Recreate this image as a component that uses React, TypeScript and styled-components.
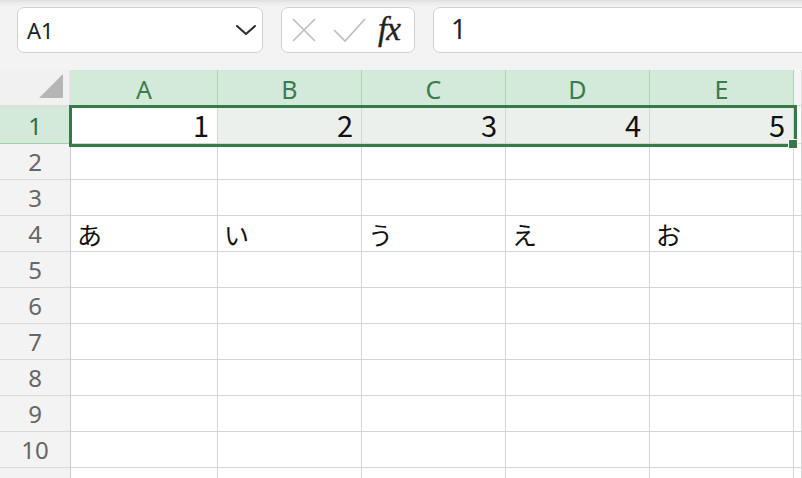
import React from 'react';
import styled, { createGlobalStyle } from 'styled-components';

const Global = createGlobalStyle`
  html, body { margin: 0; padding: 0; background: #f3f3f3; overflow: hidden; }
  body { width: 802px; height: 478px; }
`;

const Page = styled.div`
  width: 802px;
  height: 478px;
  overflow: hidden;
  background: #f3f3f3;
  display: flex;
  flex-direction: column;
`;

const Toolbar = styled.div`
  height: 70px;
  box-sizing: border-box;
  padding: 7px 0 17px 17px;
  display: flex;
  gap: 18px;
  background: linear-gradient(to bottom, #dedede 0px, #ececec 3px, #f3f3f3 7px);
  flex-shrink: 0;
  overflow: hidden;
`;

const NameBox = styled.div`
  flex: 0 0 246px;
  box-sizing: border-box;
  background: #fff;
  border: 1.5px solid #d0d0d0;
  border-radius: 7px;
  display: flex;
  align-items: center;
  justify-content: space-between;
  padding: 0 5px 0 9px;
  font-family: 'Noto Sans', 'Open Sans', sans-serif;
  font-size: 22px;
  color: #222;
`;

const FxBox = styled.div`
  flex: 0 0 134px;
  box-sizing: border-box;
  background: #fff;
  border: 1.5px solid #d0d0d0;
  border-radius: 7px;
  display: flex;
  align-items: center;
  padding: 0 0 0 9px;
`;

const IconSlot = styled.span<{ $gap: number }>`
  display: flex;
  margin-right: ${p => p.$gap}px;
`;

const FxText = styled.span`
  font-family: 'Liberation Serif', 'DejaVu Serif', serif;
  font-style: italic;
  font-size: 33px;
  color: #222;
  line-height: 1;
  letter-spacing: -1px;
  margin-top: -2px;
  -webkit-text-stroke: 0.4px #222;
`;

const FormulaInput = styled.div`
  flex: 0 0 400px;
  box-sizing: border-box;
  background: #fff;
  border: 1.5px solid #d0d0d0;
  border-radius: 7px;
  display: flex;
  align-items: center;
  padding: 0 0 4px 17px;
  font-family: 'Noto Sans', 'Open Sans', sans-serif;
  font-size: 27px;
  color: #222;
`;

const SheetWrap = styled.div`
  position: relative;
  flex: 1;
`;

const Grid = styled.div`
  display: grid;
  grid-template-columns: 71px 147px 144px 144px 144px 144px 1fr;
  grid-template-rows: 36px 38px repeat(10, 36px) 36px;
`;

const Corner = styled.div`
  background: #f1f1f1;
  border-right: 2px solid #e4e4e4;
  border-bottom: 1px solid #dcdcdc;
  box-sizing: border-box;
  display: flex;
  align-items: flex-end;
  justify-content: flex-end;
  padding: 0 6px 7px 0;
`;

const ColHead = styled.div<{ $active?: boolean }>`
  background: ${p => (p.$active ? '#d3eadb' : '#f5f5f5')};
  border-right: 1px solid ${p => (p.$active ? '#a9d6b7' : '#dcdcdc')};
  border-bottom: 1px solid ${p => (p.$active ? '#a9d6b7' : '#dcdcdc')};
  box-sizing: border-box;
  display: flex;
  align-items: center;
  justify-content: center;
  padding-top: 4px;
  font-family: 'Noto Sans', 'Open Sans', sans-serif;
  font-size: 25px;
  line-height: 1;
  color: #3a7d4b;
`;

const RowHead = styled.div<{ $active?: boolean }>`
  background: ${p => (p.$active ? '#d3eadb' : '#f3f3f3')};
  border-right: 1px solid #c9c9c9;
  border-bottom: 1px solid ${p => (p.$active ? '#9fcfae' : '#dadada')};
  border-top: ${p => (p.$active ? '2px solid #dedede' : 'none')};
  box-sizing: border-box;
  display: flex;
  align-items: center;
  justify-content: center;
  font-family: 'Noto Sans', 'Open Sans', sans-serif;
  font-size: 24px;
  line-height: 1;
  color: ${p => (p.$active ? '#2f6e3e' : '#666')};
`;

const Cell = styled.div<{ $tint?: boolean; $num?: boolean }>`
  background: ${p => (p.$tint ? '#ebf0ec' : '#fff')};
  border-right: 1px solid #d4d4d4;
  border-bottom: 1px solid #d4d4d4;
  box-sizing: border-box;
  display: flex;
  align-items: center;
  justify-content: ${p => (p.$num ? 'flex-end' : 'flex-start')};
  padding: ${p => (p.$num ? '0 8px 0 0' : '2px 0 0 6px')};
  font-family: 'Noto Sans CJK JP', 'Noto Sans', sans-serif;
  font-size: ${p => (p.$num ? '29px' : '25px')};
  line-height: 1;
  color: #111;
  white-space: nowrap;
`;

const Selection = styled.div`
  position: absolute;
  left: 69px;
  top: 35px;
  width: 728px;
  height: 42px;
  box-sizing: border-box;
  border: 3px solid #377a48;
  pointer-events: none;
`;

const Handle = styled.div`
  position: absolute;
  left: 789px;
  top: 70px;
  width: 8px;
  height: 8px;
  box-sizing: border-box;
  background: #377a48;
  outline: 1px solid #fff;
`;

const cols = ['A', 'B', 'C', 'D', 'E'];
const kana = ['あ', 'い', 'う', 'え', 'お'];

export default function App() {
  const rows: React.ReactNode[] = [];
  for (let r = 1; r <= 11; r++) {
    rows.push(
      <RowHead key={`h${r}`} $active={r === 1}>
        {r <= 10 ? r : ''}
      </RowHead>
    );
    for (let c = 0; c < 6; c++) {
      let content: React.ReactNode = '';
      let num = false;
      if (r === 1 && c < 5) {
        content = c + 1;
        num = true;
      } else if (r === 4 && c < 5) {
        content = kana[c];
      }
      rows.push(
        <Cell key={`c${r}-${c}`} $num={num} $tint={r === 1 && c >= 1 && c <= 4}>
          {content}
        </Cell>
      );
    }
  }

  return (
    <Page>
      <Global />
      <Toolbar>
        <NameBox>
          <span>A1</span>
          <svg width="22" height="12" viewBox="0 0 22 12">
            <path d="M2 2 L11 10 L20 2" fill="none" stroke="#2b2b2b" strokeWidth="2" strokeLinecap="round" strokeLinejoin="round" />
          </svg>
        </NameBox>
        <FxBox>
          <IconSlot $gap={16}>
            <svg width="26" height="26" viewBox="0 0 26 26">
              <path d="M2 2 L24 24 M24 2 L2 24" stroke="#bdbdbd" strokeWidth="1.6" fill="none" />
            </svg>
          </IconSlot>
          <IconSlot $gap={12}>
            <svg width="33" height="26" viewBox="0 0 33 26">
              <path d="M1 13 L12 24 L32 2" stroke="#bdbdbd" strokeWidth="1.6" fill="none" />
            </svg>
          </IconSlot>
          <FxText>fx</FxText>
        </FxBox>
        <FormulaInput>1</FormulaInput>
      </Toolbar>
      <SheetWrap>
        <Grid>
          <Corner>
            <svg width="24" height="24" viewBox="0 0 24 24">
              <path d="M24 0 L24 24 L0 24 Z" fill="#b5b5b5" />
            </svg>
          </Corner>
          {cols.map(c => (
            <ColHead key={c} $active>
              {c}
            </ColHead>
          ))}
          <ColHead />
          {rows}
        </Grid>
        <Selection />
        <Handle />
      </SheetWrap>
    </Page>
  );
}
